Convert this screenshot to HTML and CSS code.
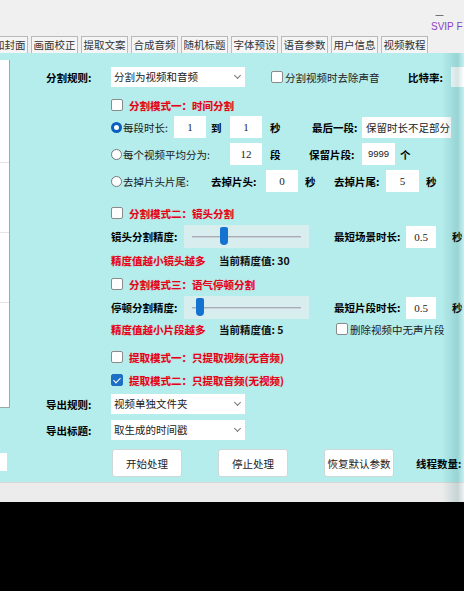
FILE: index.html
```html
<!DOCTYPE html>
<html lang="zh-CN">
<head>
    <meta charset="UTF-8">
    <meta name="viewport" content="width=device-width, initial-scale=1.0">
    <title>视频分割</title>
    <link rel="stylesheet" href="styles.css">
</head>
<body>
    <div class="window">
        <div class="titlebar">
            <span class="min-btn">—</span>
            <span class="svip">SVIP F</span>
        </div>

        <div class="tabs">
            <span class="tab">添加封面</span>
            <span class="tab">画面校正</span>
            <span class="tab">提取文案</span>
            <span class="tab">合成音频</span>
            <span class="tab">随机标题</span>
            <span class="tab">字体预设</span>
            <span class="tab">语音参数</span>
            <span class="tab">用户信息</span>
            <span class="tab">视频教程</span>
        </div>

        <div class="main">
            <div class="side">
                <div class="side-list">
                    <div class="side-item"></div>
                    <div class="side-item"></div>
                    <div class="side-item"></div>
                </div>
                <div class="side-box"></div>
            </div>

            <div class="content">
                <!-- 分割规则 -->
                <div class="row h20 mt14">
                    <span class="key w65 ml36">分割规则:</span>
                    <div class="select w134">分割为视频和音频<span class="chev"></span></div>
                    <label class="check ml26 w137"><span class="box"></span>分割视频时去除声音</label>
                    <span class="key">比特率:</span>
                    <span class="input w30 ml8"></span>
                </div>

                <!-- 模式一 -->
                <div class="row h14 mt11 indent">
                    <label class="check gap6"><span class="box"></span><span class="red">分割模式一：时间分割</span></label>
                </div>
                <div class="row h22 mt4 indent">
                    <span class="radio on"></span>
                    <span class="w51">每段时长:</span>
                    <span class="input w32">1</span>
                    <span class="key w24 pl5">到</span>
                    <span class="input w32">1</span>
                    <span class="key w50 pl8">秒</span>
                    <span class="key w50">最后一段:</span>
                    <div class="select w89 flat">保留时长不足部分</div>
                </div>
                <div class="row h22 mt5 indent">
                    <span class="radio"></span>
                    <span class="w107">每个视频平均分为:</span>
                    <span class="input w32">12</span>
                    <span class="key w47 pl8">段</span>
                    <span class="key w53">保留片段:</span>
                    <span class="input w33 small">9999</span>
                    <span class="key pl5">个</span>
                </div>
                <div class="row h22 mt5 indent">
                    <span class="radio"></span>
                    <span class="w88">去掉片头片尾:</span>
                    <span class="key w55">去掉片头:</span>
                    <span class="input w32">0</span>
                    <span class="key w36 pl7">秒</span>
                    <span class="key w52">去掉片尾:</span>
                    <span class="input w33">5</span>
                    <span class="key pl7">秒</span>
                </div>

                <!-- 模式二 -->
                <div class="row h14 mt14 indent">
                    <label class="check gap6"><span class="box"></span><span class="red">分割模式二：镜头分割</span></label>
                </div>
                <div class="row h23 mt5 indent">
                    <span class="key w73">镜头分割精度:</span>
                    <div class="slider"><span class="track"></span><span class="thumb" style="left: 36px"></span></div>
                    <span class="key w97 pl25">最短场景时长:</span>
                    <span class="input w30">0.5</span>
                    <span class="key pl16">秒</span>
                </div>
                <div class="row h14 mt5 indent">
                    <span class="red w108">精度值越小镜头越多</span>
                    <span class="semi">当前精度值: 30</span>
                </div>

                <!-- 模式三 -->
                <div class="row h14 mt10 indent">
                    <label class="check gap6"><span class="box"></span><span class="red">分割模式三：语气停顿分割</span></label>
                </div>
                <div class="row h23 mt5 indent">
                    <span class="key w73">停顿分割精度:</span>
                    <div class="slider"><span class="track"></span><span class="thumb" style="left: 12px"></span></div>
                    <span class="key w97 pl25">最短片段时长:</span>
                    <span class="input w30">0.5</span>
                    <span class="key pl16">秒</span>
                </div>
                <div class="row h14 mt3 indent">
                    <span class="red w108">精度值越小片段越多</span>
                    <span class="semi w117">当前精度值: 5</span>
                    <label class="check"><span class="box"></span>删除视频中无声片段</label>
                </div>

                <!-- 提取模式 -->
                <div class="row h14 mt14 indent">
                    <label class="check gap6"><span class="box"></span><span class="red">提取模式一：只提取视频(无音频)</span></label>
                </div>
                <div class="row h14 mt9 indent">
                    <label class="check gap6"><span class="box checked"></span><span class="red">提取模式二：只提取音频(无视频)</span></label>
                </div>

                <!-- 导出 -->
                <div class="row h20 mt7">
                    <span class="key w65 ml36">导出规则:</span>
                    <div class="select w134">视频单独文件夹<span class="chev"></span></div>
                </div>
                <div class="row h20 mt6">
                    <span class="key w65 ml36">导出标题:</span>
                    <div class="select w134">取生成的时间戳<span class="chev"></span></div>
                </div>

                <div class="row h28 mt9">
                    <button class="btn ml102">开始处理</button>
                    <button class="btn ml36">停止处理</button>
                    <button class="btn ml36">恢复默认参数</button>
                    <span class="key ml22">线程数量:</span>
                </div>
            </div>
        </div>

        <div class="statusbar"></div>
        <div class="edge"></div>
    </div>
</body>
</html>
```

FILE: styles.css
```css
* {
    box-sizing: border-box;
}
body {
    margin: 0;
    background-color: #000;
    font-family: "Noto Sans CJK SC", "Noto Sans", sans-serif;
    font-size: 10.5px;
    color: #1a1a1a;
    overflow: hidden;
}
.window {
    position: relative;
    width: 464px;
    overflow: hidden;
    background-color: #f0f0f0;
}

/* 标题栏 */
.titlebar {
    height: 35px;
    position: relative;
}
.min-btn {
    position: absolute;
    left: 435px;
    top: 8px;
    font-size: 10px;
    line-height: 12px;
    color: #555;
}
.svip {
    position: absolute;
    left: 431px;
    top: 21px;
    font-size: 10px;
    line-height: 11px;
    color: #8a3fc8;
    white-space: nowrap;
    font-family: "Liberation Sans", sans-serif;
}

/* 选项卡 */
.tabs {
    display: flex;
    gap: 3px;
    height: 18px;
    margin-left: -19px;
    align-items: flex-end;
}
.tab {
    flex: none;
    height: 17px;
    width: 47px;
    border: 1px solid #b9b9b9;
    border-bottom: none;
    background-color: #f5f5f5;
    color: #333;
    font-size: 10.5px;
    line-height: 15px;
    text-align: center;
    white-space: nowrap;
}

/* 主面板 */
.main {
    display: flex;
    height: 429px;
    background-color: #b5ecec;
}
.side {
    width: 10px;
    flex: none;
    display: flex;
    flex-direction: column;
}
.side-list {
    margin-top: 7px;
    height: 348px;
    background-color: #fff;
    border-right: 1px solid #9aa;
    border-bottom: 1px solid #9aa;
}
.side-item {
    height: 1px;
    background-color: #e4e4e4;
    margin-top: 102px;
}
.side-item + .side-item {
    margin-top: 69px;
}
.side-box {
    margin-top: 45px;
    width: 7px;
    height: 18px;
    background-color: #fff;
}
.content {
    flex: 1;
    display: flex;
    flex-direction: column;
}

.row {
    display: flex;
    align-items: center;
    white-space: nowrap;
    flex: none;
}
.indent {
    padding-left: 101px;
}
.h14 { height: 14px; }
.h20 { height: 20px; }
.h22 { height: 22px; }
.h23 { height: 23px; }
.h28 { height: 28px; }
.mt3 { margin-top: 3px; }
.mt4 { margin-top: 4px; }
.mt5 { margin-top: 5px; }
.mt6 { margin-top: 6px; }
.mt7 { margin-top: 7px; }
.mt9 { margin-top: 9px; }
.mt10 { margin-top: 10px; }
.mt11 { margin-top: 11px; }
.mt14 { margin-top: 14px; }
.ml8 { margin-left: 8px; }
.ml22 { margin-left: 22px; }
.ml26 { margin-left: 26px; }
.ml36 { margin-left: 36px; }
.ml102 { margin-left: 102px; }
.pl5 { padding-left: 5px; }
.pl7 { padding-left: 7px; }
.pl8 { padding-left: 8px; }
.pl16 { padding-left: 16px; }
.pl25 { padding-left: 25px; }
.w24 { width: 24px; flex: none; }
.w30 { width: 30px; flex: none; }
.w32 { width: 32px; flex: none; }
.w33 { width: 33px; flex: none; }
.w36 { width: 36px; flex: none; }
.w47 { width: 47px; flex: none; }
.w50 { width: 50px; flex: none; }
.w51 { width: 51px; flex: none; }
.w52 { width: 52px; flex: none; }
.w53 { width: 53px; flex: none; }
.w55 { width: 55px; flex: none; }
.w65 { width: 65px; flex: none; }
.w73 { width: 73px; flex: none; }
.w88 { width: 88px; flex: none; }
.w89 { width: 89px; flex: none; }
.w97 { width: 97px; flex: none; }
.w107 { width: 107px; flex: none; }
.w108 { width: 108px; flex: none; }
.w117 { width: 117px; flex: none; }
.w134 { width: 134px; flex: none; }
.w137 { width: 137px; flex: none; }

.key {
    font-weight: bold;
    color: #000;
}
.semi {
    font-weight: 600;
    color: #111;
}
.red {
    color: #e3001b;
    font-weight: bold;
    text-shadow: 0 0 1px rgba(255, 120, 80, 0.5);
}

/* 控件 */
.input {
    height: 22px;
    background-color: #fff;
    text-align: center;
    line-height: 22px;
    font-family: "Liberation Serif", serif;
    font-size: 11px;
    color: #222;
}
.input.small {
    font-size: 9.5px;
    font-family: "Liberation Sans", sans-serif;
}
.row.h20 .input {
    height: 20px;
}
.select {
    position: relative;
    height: 100%;
    background-color: #fff;
    padding-left: 3px;
    line-height: 20px;
    color: #222;
}
.select.flat {
    height: 21px;
    line-height: 21px;
    padding-left: 4px;
}
.chev {
    position: absolute;
    right: 5px;
    top: 6px;
    width: 5px;
    height: 5px;
    border-right: 1px solid #777;
    border-bottom: 1px solid #777;
    transform: rotate(45deg);
}
.check {
    display: flex;
    align-items: center;
    gap: 2px;
    color: #222;
}
.check.gap6 {
    gap: 6px;
}
.box {
    width: 12px;
    height: 12px;
    flex: none;
    background-color: #fff;
    border: 1px solid #8a8a8a;
    border-radius: 2px;
}
.box.checked {
    position: relative;
    background-color: #1d6fc4;
    border-color: #1d6fc4;
}
.box.checked::after {
    content: "";
    position: absolute;
    left: 3px;
    top: 1px;
    width: 3px;
    height: 6px;
    border-right: 1.5px solid #fff;
    border-bottom: 1.5px solid #fff;
    transform: rotate(45deg);
}
.radio {
    width: 11px;
    height: 11px;
    flex: none;
    border-radius: 50%;
    border: 1px solid #777;
    background-color: #fff;
    margin-right: 1px;
}
.radio.on {
    border: 3px solid #0b5fbf;
}
.slider {
    position: relative;
    width: 125px;
    height: 23px;
    flex: none;
    background-color: #d8eeee;
}
.track {
    position: absolute;
    left: 8px;
    right: 8px;
    top: 11px;
    height: 2px;
    background-color: #c8d4d4;
    border-top: 1px solid #aab;
}
.thumb {
    position: absolute;
    top: 2px;
    width: 8px;
    height: 18px;
    background-color: #1472d0;
    border-radius: 2px 2px 4px 4px;
}
.btn {
    width: 70px;
    height: 28px;
    flex: none;
    background-color: #fff;
    border: 1px solid #cfd8d8;
    border-radius: 3px;
    font-family: inherit;
    font-size: 10.5px;
    color: #222;
    padding: 0;
}

.statusbar {
    height: 20px;
    background-color: #ececec;
    border-top: 1px solid #d8d8d8;
}

/* 右侧窗口边缘阴影 */
.edge {
    position: absolute;
    top: 53px;
    right: 0;
    width: 22px;
    height: 449px;
    background: linear-gradient(to right, rgba(0, 90, 90, 0), rgba(0, 90, 90, 0.16) 70%, rgba(255, 255, 255, 0.25));
    pointer-events: none;
}
```
